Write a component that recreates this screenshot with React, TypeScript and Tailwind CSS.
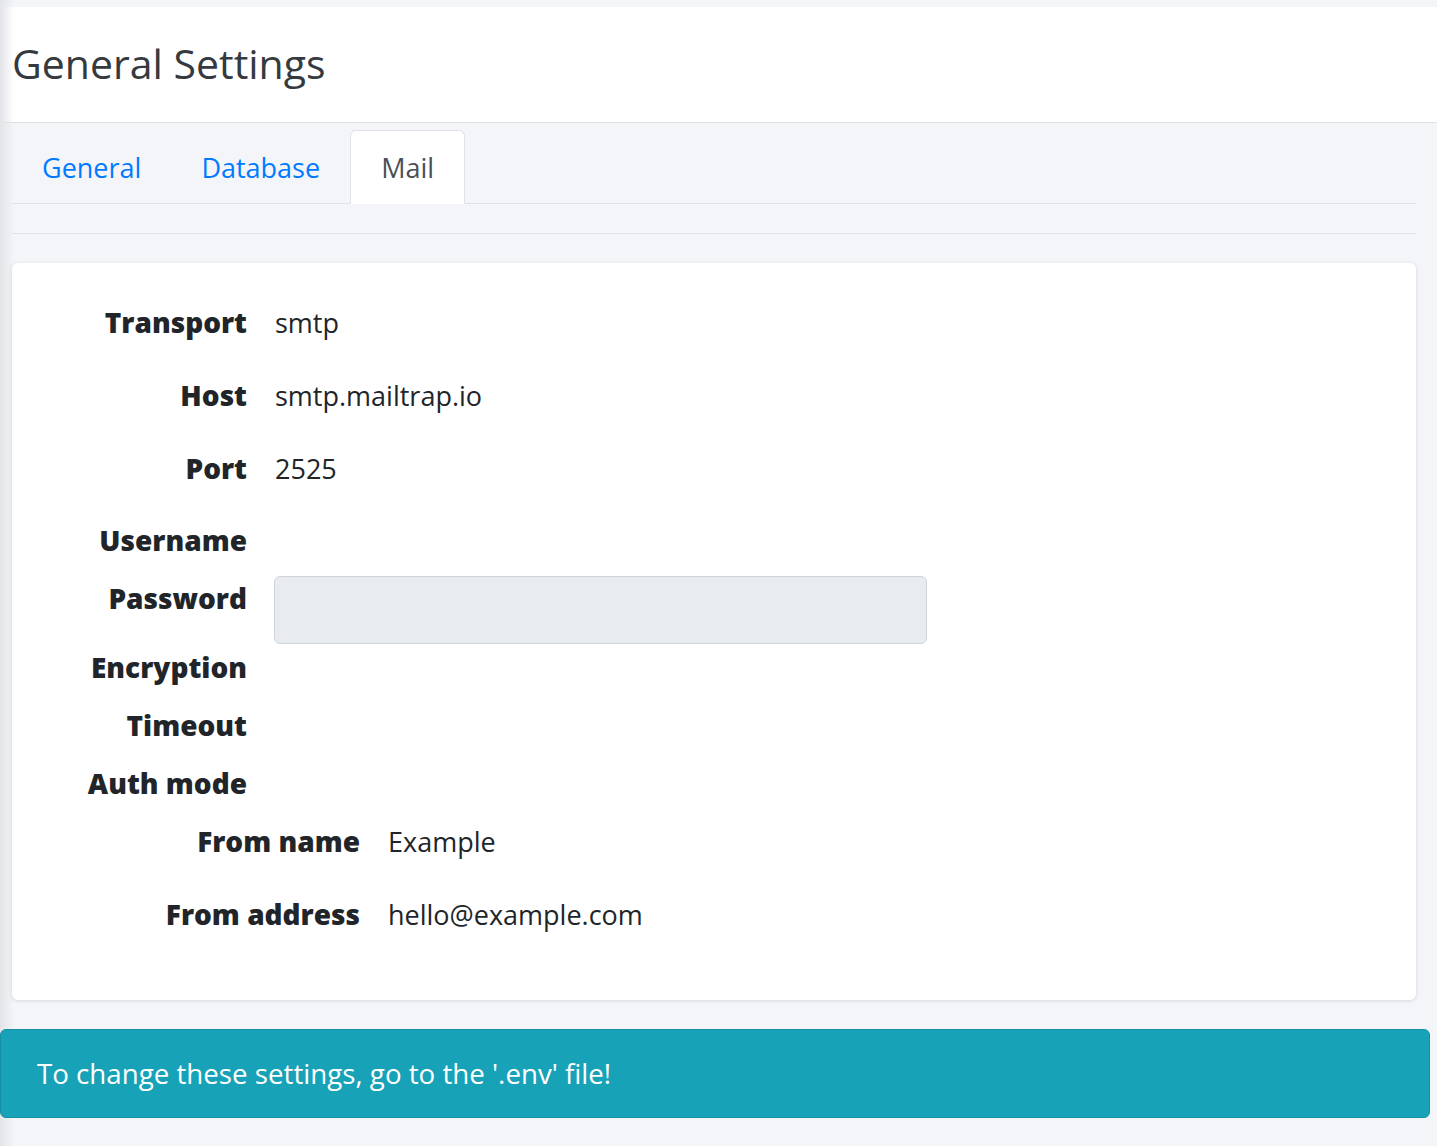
import type { ReactNode } from 'react';

type Row = { label: string; value?: string; h: string; input?: boolean };

const mainRows: Row[] = [
  { label: 'Transport', value: 'smtp', h: 'h-[73px]' },
  { label: 'Host', value: 'smtp.mailtrap.io', h: 'h-[73px]' },
  { label: 'Port', value: '2525', h: 'h-[73px]' },
  { label: 'Username', h: 'h-[70px]' },
  { label: 'Password', h: 'h-[68px]', input: true },
  { label: 'Encryption', h: 'h-[48px]' },
  { label: 'Timeout', h: 'h-[68px]' },
  { label: 'Auth mode', h: 'h-[48px]' },
];

const fromRows: Row[] = [
  { label: 'From name', value: 'Example', h: 'h-[68px]' },
  { label: 'From address', value: 'hello@example.com', h: 'h-[78px]' },
];

function Tab({ active, children }: { active?: boolean; children: ReactNode }) {
  if (active) {
    return (
      <div className="-mb-px flex h-[74px] items-center rounded-t-[6px] border border-[#dee2e6] border-b-white bg-white px-[30px] pt-[3px] text-[#495057]">
        {children}
      </div>
    );
  }
  return <div className="flex h-[73px] items-center px-[30px] pt-[4px] text-[#007bff]">{children}</div>;
}

function SettingRow({ row, labelWidth }: { row: Row; labelWidth: string }) {
  if (row.input) {
    return (
      <div className={`flex items-start gap-[27px] ${row.h}`}>
        <div className={`${labelWidth} shrink-0 pt-[1px] text-right text-[28px] font-extrabold leading-[42px] text-[#212529]`}>
          {row.label}
        </div>
        <div className="h-[68px] w-[653px] rounded-[6px] border border-[#ced4da] bg-[#e9ecef]" />
      </div>
    );
  }
  return (
    <div className={`flex items-center gap-[28px] ${row.h}`}>
      <div className={`${labelWidth} shrink-0 pb-[3px] text-right text-[28px] font-extrabold text-[#212529]`}>
        {row.label}
      </div>
      {row.value ? <div className="text-[#212529]">{row.value}</div> : null}
    </div>
  );
}

export default function App() {
  return (
    <div className="relative min-h-[1146px] bg-[#f4f5f8] pt-[7px] font-['Open_Sans',sans-serif] text-[27px]">
      <div className="pointer-events-none absolute inset-y-0 left-0 w-[14px] bg-gradient-to-r from-[#e3e4e8] to-transparent" />

      <header className="flex h-[116px] items-center border-b border-[#dee2e6] bg-white px-[12px] pb-[2px]">
        <h1 className="text-[41px] leading-none text-[#343a40]">General Settings</h1>
      </header>

      <div className="px-[12px] pr-[21px] pt-[7px]">
        <nav className="flex border-b border-[#dee2e6]">
          <Tab>General</Tab>
          <Tab>Database</Tab>
          <Tab active>Mail</Tab>
        </nav>

        <hr className="mt-[29px] border-t border-[#dee2e6]" />

        <section className="relative mt-[29px] rounded-[6px] bg-white pb-[46px] pt-[24px] shadow-[0_1px_4px_rgba(0,0,0,0.12)]">
          {mainRows.map((row) => (
            <SettingRow key={row.label} row={row} labelWidth="w-[235px]" />
          ))}
          {fromRows.map((row) => (
            <SettingRow key={row.label} row={row} labelWidth="w-[348px]" />
          ))}
        </section>
      </div>

      <div className="relative z-10 mr-[7px] mt-[29px] flex h-[89px] items-center rounded-[6px] border border-[#1591a5] bg-[#17a2b8] px-[36px] text-[27.7px] text-white">
        To change these settings, go to the '.env' file!
      </div>
    </div>
  );
}
